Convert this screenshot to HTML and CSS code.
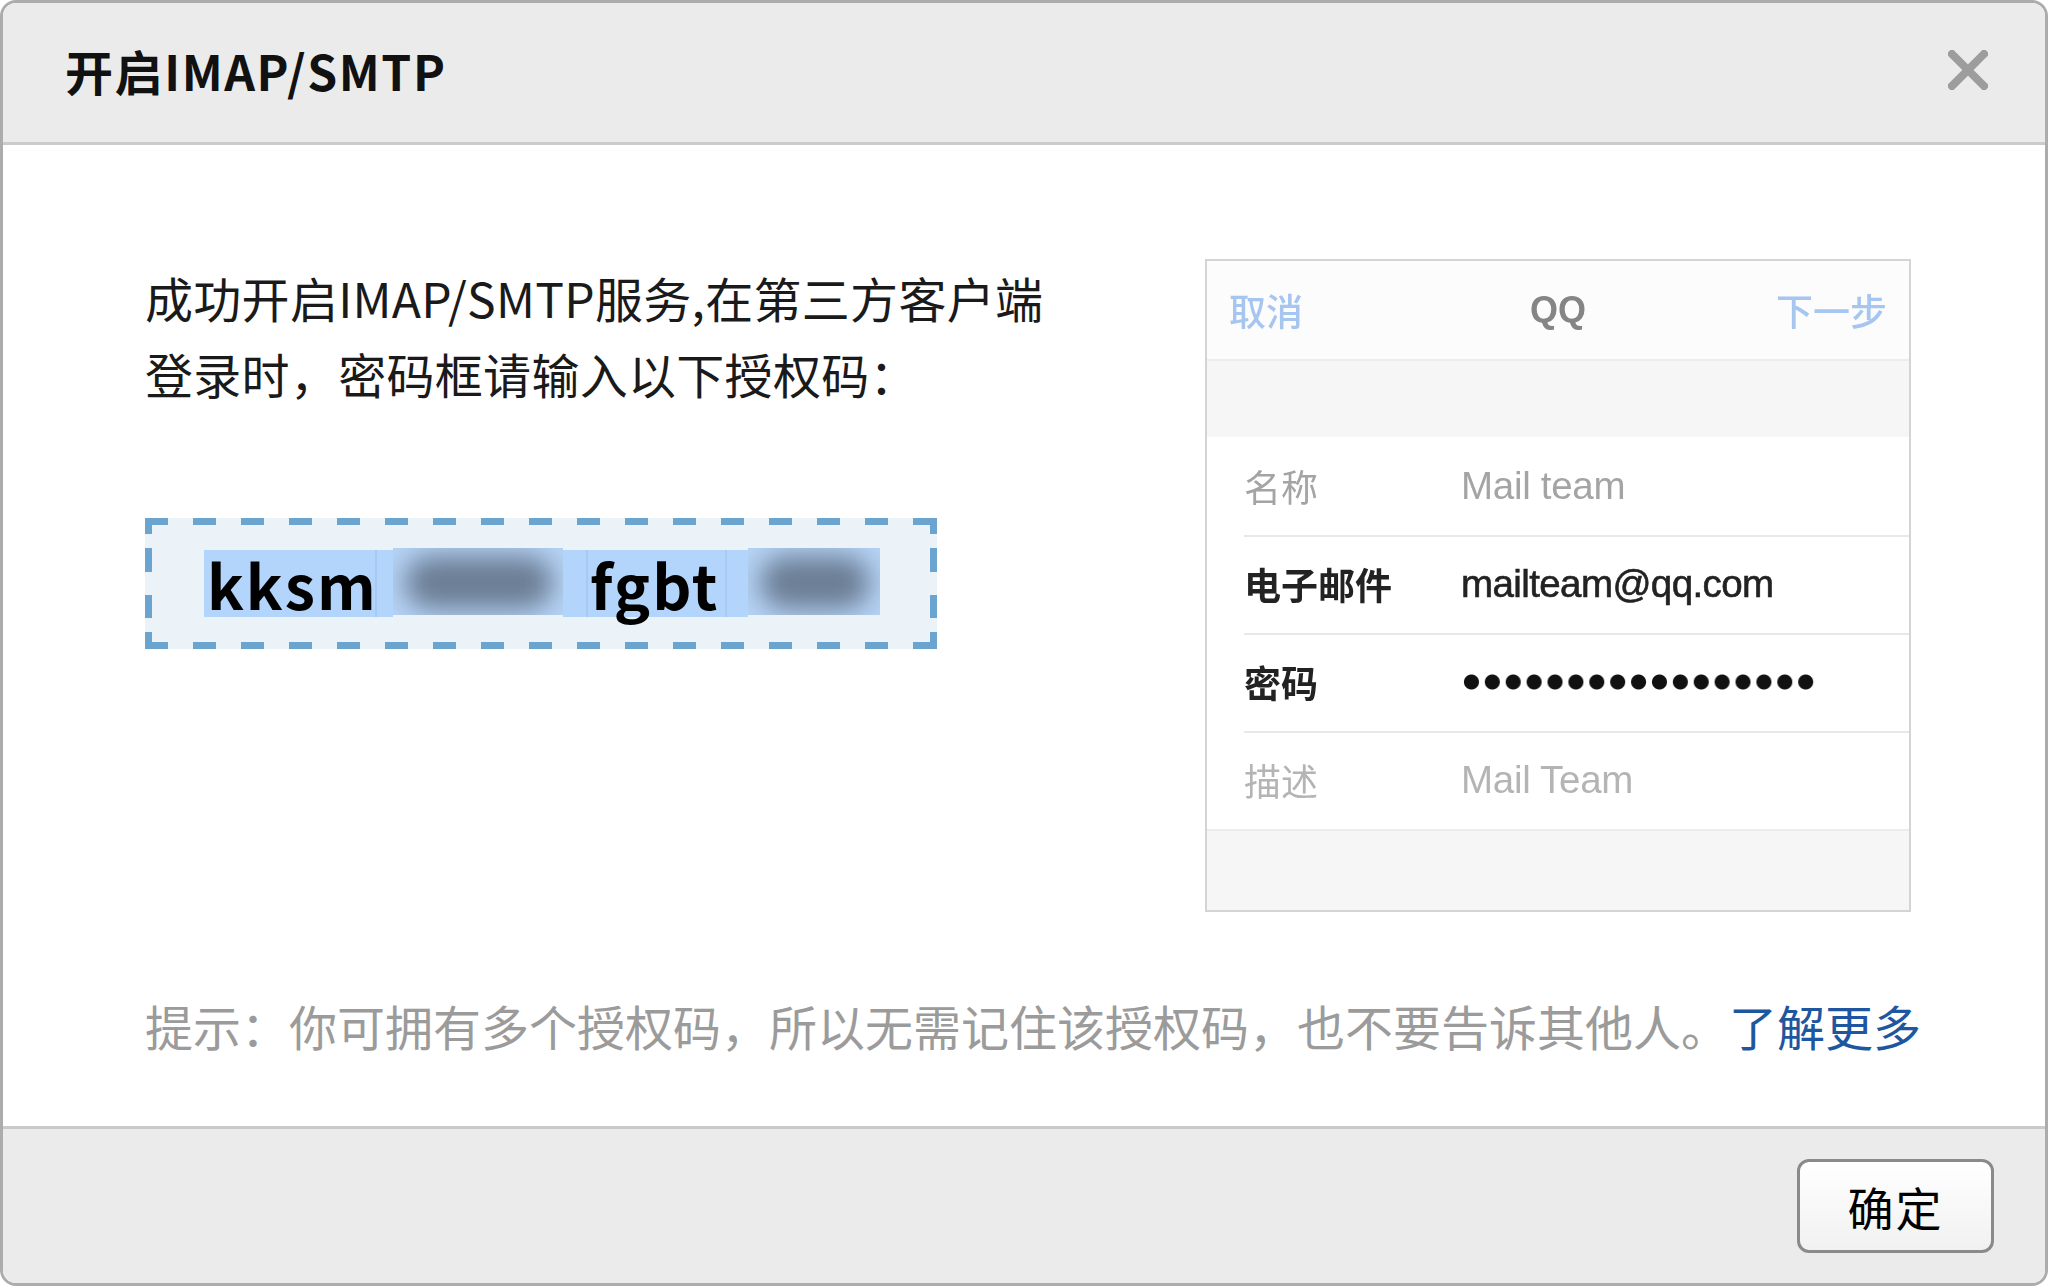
FILE: index.html
```html
<!DOCTYPE html>
<html lang="zh-CN">
<head>
<meta charset="utf-8">
<title>开启IMAP/SMTP</title>
<link rel="stylesheet" href="styles.css">
</head>
<body>
<div class="dialog">
  <div class="header">
    <div class="title">开启IMAP/SMTP</div>
    <svg class="close" width="40" height="40" viewBox="0 0 40 40"><path d="M4 4 L36 36 M36 4 L4 36" stroke="#9d9d9d" stroke-width="8" stroke-linecap="square" fill="none"/></svg>
  </div>
  <div class="body">
    <div class="main">
      <div class="left">
        <p class="desc">成功开启IMAP/SMTP服务,在第三方客户端<br>登录时，密码框请输入以下授权码：</p>
        <div class="codebox">
          <div class="code"><span class="seg s1">kksm</span><span class="strip st1"></span><span class="blur b1"><i></i></span><span class="strip st2"></span><span class="seg s2">fgbt</span><span class="strip st3"></span><span class="blur b2"><i></i></span></div>
        </div>
      </div>
      <div class="phone">
        <div class="nav"><span class="nav-l">取消</span><span class="nav-c">QQ</span><span class="nav-r">下一步</span></div>
        <div class="spacer"></div>
        <div class="row faint"><span class="lab">名称</span><span class="val">Mail team</span></div>
        <div class="row strong"><span class="lab">电子邮件</span><span class="val">mailteam@qq.com</span></div>
        <div class="row strong"><span class="lab">密码</span><span class="dots"></span></div>
        <div class="row faint2"><span class="lab">描述</span><span class="val">Mail Team</span></div>
        <div class="spacer bottom"></div>
      </div>
    </div>
    <p class="hint">提示：你可拥有多个授权码，所以无需记住该授权码，也不要告诉其他人。<a class="more">了解更多</a></p>
  </div>
  <div class="footer">
    <button class="ok">确定</button>
  </div>
</div>
</body>
</html>
```

FILE: styles.css
```css
html, body {
  margin: 0;
  padding: 0;
  background: #ffffff;
}
body {
  font-family: "Noto Sans CJK SC", "Noto Sans", sans-serif;
  color: #1a1a1a;
}
.dialog {
  width: 2048px;
  height: 1286px;
  box-sizing: border-box;
  border: 3px solid #acacac;
  border-radius: 16px;
  overflow: hidden;
  display: flex;
  flex-direction: column;
  background: #fff;
}
.header {
  height: 139px;
  flex: none;
  background: #ebebeb;
  border-bottom: 3px solid #cbcbcb;
  display: flex;
  align-items: center;
  justify-content: space-between;
  padding: 0 57px 0 62px;
}
.title {
  font-size: 48px;
  font-weight: 700;
  color: #111;
  letter-spacing: 1.6px;
  margin-top: -6px;
}
.close {
  display: block;
  margin-top: -6px;
}
.body {
  flex: 1;
  padding: 114px 134px 0 142px;
  display: flex;
  flex-direction: column;
}
.main {
  display: flex;
  justify-content: space-between;
  align-items: flex-start;
}
.left {
  display: flex;
  flex-direction: column;
}
.desc {
  margin: 0;
  font-size: 48px;
  line-height: 76px;
  color: #1a1a1a;
  letter-spacing: 0.3px;
}
.codebox {
  margin-top: 107px;
  width: 792px;
  height: 131px;
  box-sizing: border-box;
  background:
    repeating-linear-gradient(90deg, #6aa4cf 0 23px, rgba(0,0,0,0) 23px 48px) left top / 100% 7px no-repeat,
    repeating-linear-gradient(90deg, #6aa4cf 0 23px, rgba(0,0,0,0) 23px 48px) left bottom / 100% 7px no-repeat,
    linear-gradient(180deg, #6aa4cf 0 16px, rgba(0,0,0,0) 16px 30px, #6aa4cf 30px 54px, rgba(0,0,0,0) 54px 77px, #6aa4cf 77px 100px, rgba(0,0,0,0) 100px 114px, #6aa4cf 114px 131px) left top / 7px 100% no-repeat,
    linear-gradient(180deg, #6aa4cf 0 16px, rgba(0,0,0,0) 16px 30px, #6aa4cf 30px 54px, rgba(0,0,0,0) 54px 77px, #6aa4cf 77px 100px, rgba(0,0,0,0) 100px 114px, #6aa4cf 114px 131px) right top / 7px 100% no-repeat,
    #ebf3f9;
  padding: 32px 0 0 59px;
}
.code {
  display: flex;
  height: 67px;
  align-items: stretch;
}
.seg {
  background: #b3d4fb;
  font-size: 61px;
  font-weight: 700;
  letter-spacing: 2px;
  line-height: 67px;
  color: #000;
  box-sizing: border-box;
  white-space: nowrap;
  overflow: visible;
}
.s1 { width: 171px; padding-left: 3px; }
.s2 { width: 137px; padding-left: 2px; }
.strip {
  background: #b3d4fb;
  box-sizing: border-box;
}
.st1 { width: 18px; border-left: 2px solid #a6caf3; }
.st2 { width: 25px; border-right: 2px solid #a6caf3; }
.st3 { width: 23px; border-left: 2px solid #a6caf3; }
.blur {
  position: relative;
  background: #b6d3f5;
  overflow: hidden;
  margin-top: -2px;
  height: 67px;
}
.b1 { width: 170px; }
.b2 { width: 132px; }
.blur i {
  position: absolute;
  left: 12px;
  right: 10px;
  top: 8px;
  bottom: 6px;
  background: #6b7d94;
  filter: blur(13px);
  border-radius: 26px;
}
.phone {
  width: 706px;
  height: 653px;
  box-sizing: border-box;
  border: 2px solid #d4d4d4;
  background: #f6f6f7;
  display: flex;
  flex-direction: column;
  filter: blur(0.7px);
}
.nav {
  height: 98px;
  background: #fcfcfc;
  border-bottom: 2px solid #ececec;
  display: grid;
  grid-template-columns: 1fr auto 1fr;
  align-items: center;
  padding: 0 22px 0 22px;
  font-size: 37px;
  font-family: "Noto Sans CJK SC", "Liberation Sans", sans-serif;
}
.nav-l, .nav-r { color: #a6c6ef; font-weight: 500; }
.nav-r { text-align: right; }
.nav-c { color: #858585; font-family: "Liberation Sans", sans-serif; font-weight: 700; font-size: 36px; }
.spacer {
  height: 76px;
  background: #f6f6f7;
}
.spacer.bottom {
  flex: 1;
  border-top: 2px solid #ececec;
}
.row {
  height: 98px;
  background: #fff;
  display: flex;
  align-items: center;
  position: relative;
  padding-left: 37px;
  font-size: 37px;
}
.row + .row::before {
  content: "";
  position: absolute;
  left: 37px;
  right: 0;
  top: 0;
  height: 2px;
  background: #e8e8e8;
}
.lab {
  width: 217px;
  flex: none;
}
.val {
  font-family: "Liberation Sans", sans-serif;
  font-size: 38.5px;
  letter-spacing: -0.3px;
}
.faint .lab, .faint .val { color: #a4a4a4; }
.faint2 .lab, .faint2 .val { color: #b4b4b4; }
.strong .lab { color: #222; font-weight: 700; }
.strong .val { color: #222; font-weight: 500; -webkit-text-stroke: 0.6px #222; letter-spacing: -0.6px; }
.dots {
  width: 356px;
  height: 20px;
  background: radial-gradient(circle, #111 0, #111 7px, rgba(0,0,0,0) 8px) 0 0 / 20.9px 20px repeat-x;
}
.hint {
  margin: 82px 0 0 0;
  font-size: 48px;
  line-height: 62px;
  color: #9b9b9b;
  white-space: nowrap;
}
.more {
  color: #1e56a0;
}
.footer {
  height: 157px;
  flex: none;
  background: #ebebeb;
  border-top: 3px solid #cacaca;
  display: flex;
  justify-content: flex-end;
  align-items: flex-start;
  padding: 30px 51px 0 0;
  box-sizing: border-box;
}
.ok {
  width: 197px;
  height: 94px;
  border: 3px solid #8a8a8a;
  border-radius: 12px;
  background: linear-gradient(#ffffff, #f1f1f1);
  font-family: "Noto Sans CJK SC", sans-serif;
  font-size: 46px;
  color: #000;
  padding: 0;
  letter-spacing: 2px;
}
```
